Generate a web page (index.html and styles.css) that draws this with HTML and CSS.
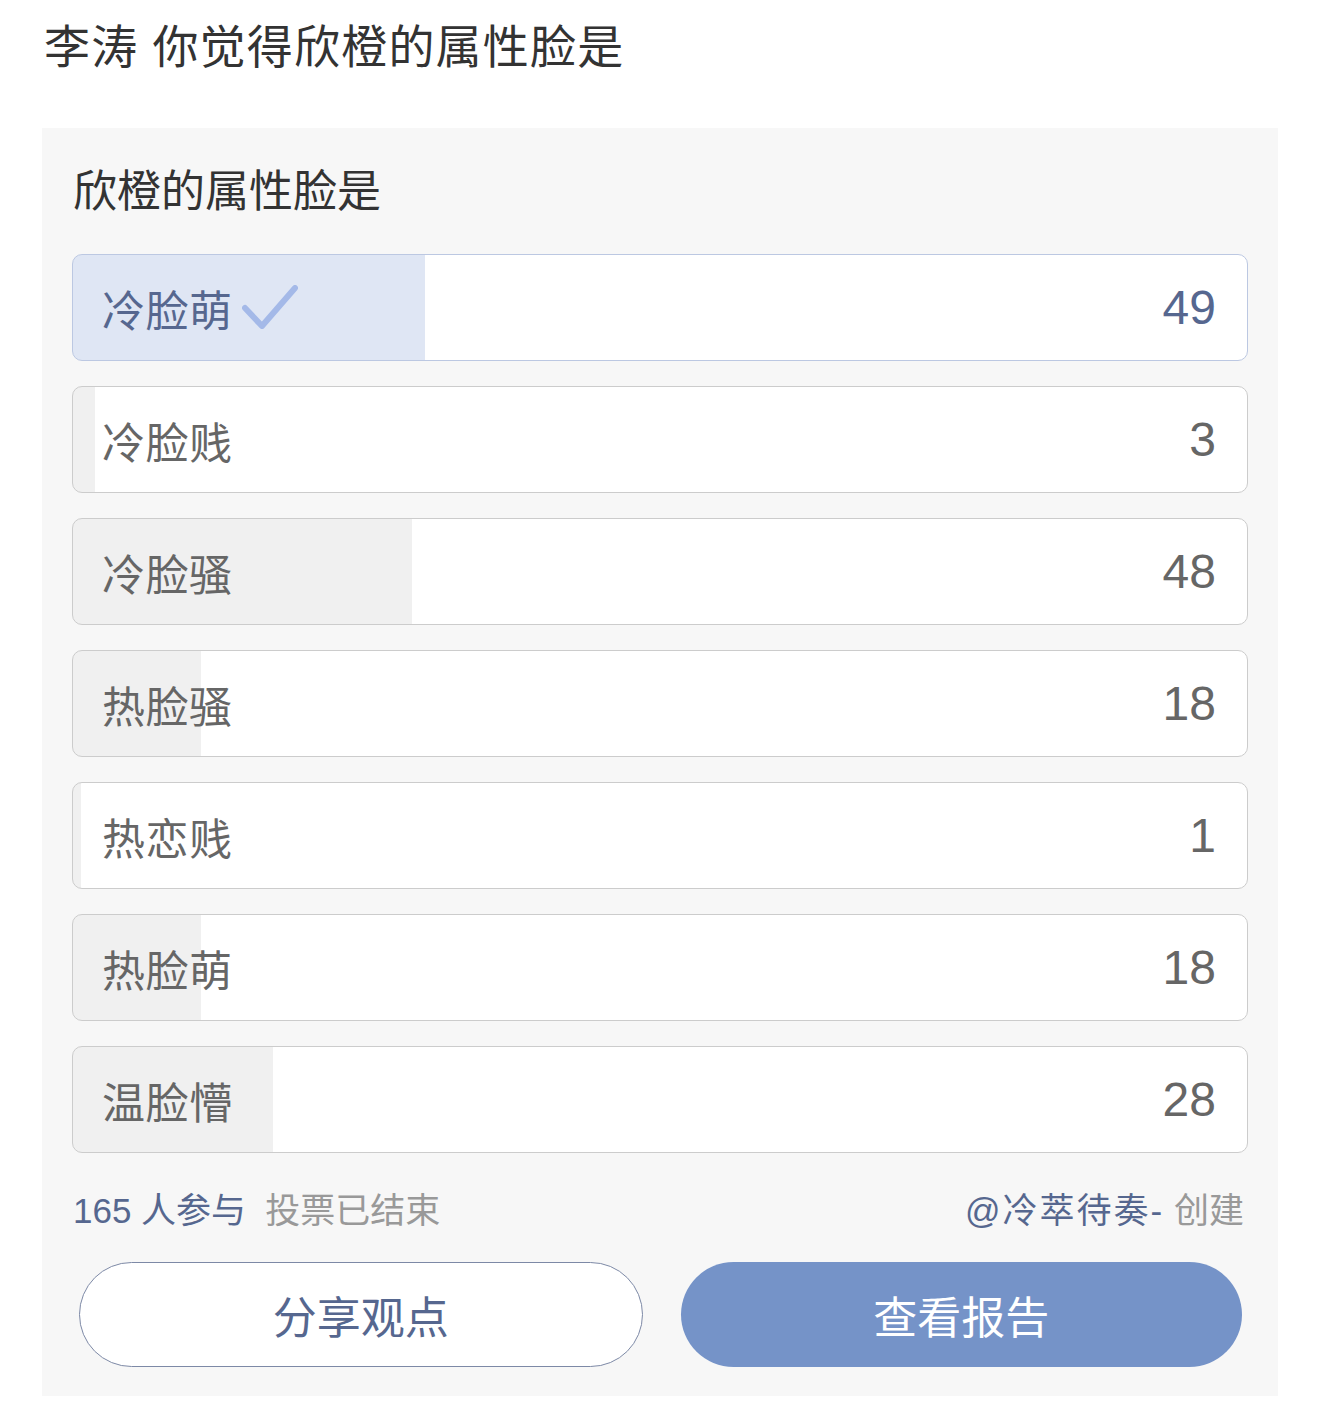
FILE: index.html
```html
<!DOCTYPE html>
<html lang="zh">
<head>
<meta charset="utf-8">
<link rel="stylesheet" href="styles.css">
</head>
<body>
<h1 class="page-title">李涛 你觉得欣橙的属性脸是</h1>
<div class="card">
  <h2 class="q-title">欣橙的属性脸是</h2>
  <div class="options">
    <div class="opt selected" style="--p:30%">
      <span class="label">冷脸萌</span>
      <svg class="check" width="56" height="44" viewBox="0 0 56 44"><path d="M3 23 L20 41 L53 3" fill="none" stroke="#a4b9e8" stroke-width="6" stroke-linecap="round" stroke-linejoin="round"/></svg>
      <span class="count">49</span>
    </div>
    <div class="opt" style="--p:1.9%"><span class="label">冷脸贱</span><span class="count">3</span></div>
    <div class="opt" style="--p:28.9%"><span class="label">冷脸骚</span><span class="count">48</span></div>
    <div class="opt" style="--p:10.9%"><span class="label">热脸骚</span><span class="count">18</span></div>
    <div class="opt" style="--p:0.7%"><span class="label">热恋贱</span><span class="count">1</span></div>
    <div class="opt" style="--p:10.9%"><span class="label">热脸萌</span><span class="count">18</span></div>
    <div class="opt" style="--p:17%"><span class="label">温脸懵</span><span class="count">28</span></div>
  </div>
  <div class="meta">
    <div class="meta-left"><span class="blue">165 人参与</span><span class="grey ended">投票已结束</span></div>
    <div class="meta-right"><span class="blue author">@冷萃待奏-</span><span class="grey"> 创建</span></div>
  </div>
  <div class="actions">
    <button class="btn btn-outline">分享观点</button>
    <button class="btn btn-fill">查看报告</button>
  </div>
</div>
</body>
</html>
```
FILE: styles.css
```css
* { box-sizing: border-box; }
body {
  margin: 0;
  background: #fff;
  font-family: "Liberation Sans", "Noto Sans CJK SC", sans-serif;
  color: #333;
}
.page-title {
  margin: 0;
  padding: 18px 0 0 44px;
  height: 128px;
  font-size: 46px;
  font-weight: normal;
  letter-spacing: 1.2px;
  line-height: 1.3;
  color: #333;
}
.card {
  margin-left: 42px;
  width: 1236px;
  height: 1268px;
  background: #f7f7f7;
  padding: 35px 30px 0 30px;
}
.q-title {
  margin: 0 0 0 1px;
  font-size: 44px;
  font-weight: normal;
  line-height: 1.3;
  color: #333;
}
.options {
  margin-top: 34px;
  display: flex;
  flex-direction: column;
  gap: 25px;
}
.opt {
  height: 107px;
  border: 1.5px solid #cccccc;
  border-radius: 10px;
  display: flex;
  align-items: center;
  padding: 0 31px 0 29px;
  background: linear-gradient(to right, #f0f0f0 var(--p), #fff var(--p));
  color: #666;
}
.opt.selected {
  border-color: #bcc8e2;
  background: linear-gradient(to right, #dfe6f4 var(--p), #fff var(--p));
  color: #56678f;
}
.label {
  font-size: 43px;
  letter-spacing: 0.5px;
}
.check {
  margin-left: 9px;
  margin-top: -2px;
}
.count {
  margin-left: auto;
  font-size: 48px;
}
.meta {
  margin-top: 29px;
  display: flex;
  justify-content: space-between;
  font-size: 35px;
  padding: 0 4px 0 1px;
}
.blue { color: #56678f; }
.grey { color: #999; }
.ended { margin-left: 19px; }
.author { letter-spacing: 2px; }
.actions {
  margin-top: 29px;
  display: flex;
  gap: 38px;
  padding: 0 6px 0 7px;
}
.btn {
  flex: 1;
  height: 105px;
  border-radius: 53px;
  font-family: "Liberation Sans", "Noto Sans CJK SC", sans-serif;
  font-size: 44px;
  cursor: pointer;
}
.btn-outline {
  background: #fff;
  border: 1.5px solid #7d89a6;
  color: #56678f;
}
.btn-fill {
  background: #7593c8;
  border: none;
  color: #fff;
}
```
